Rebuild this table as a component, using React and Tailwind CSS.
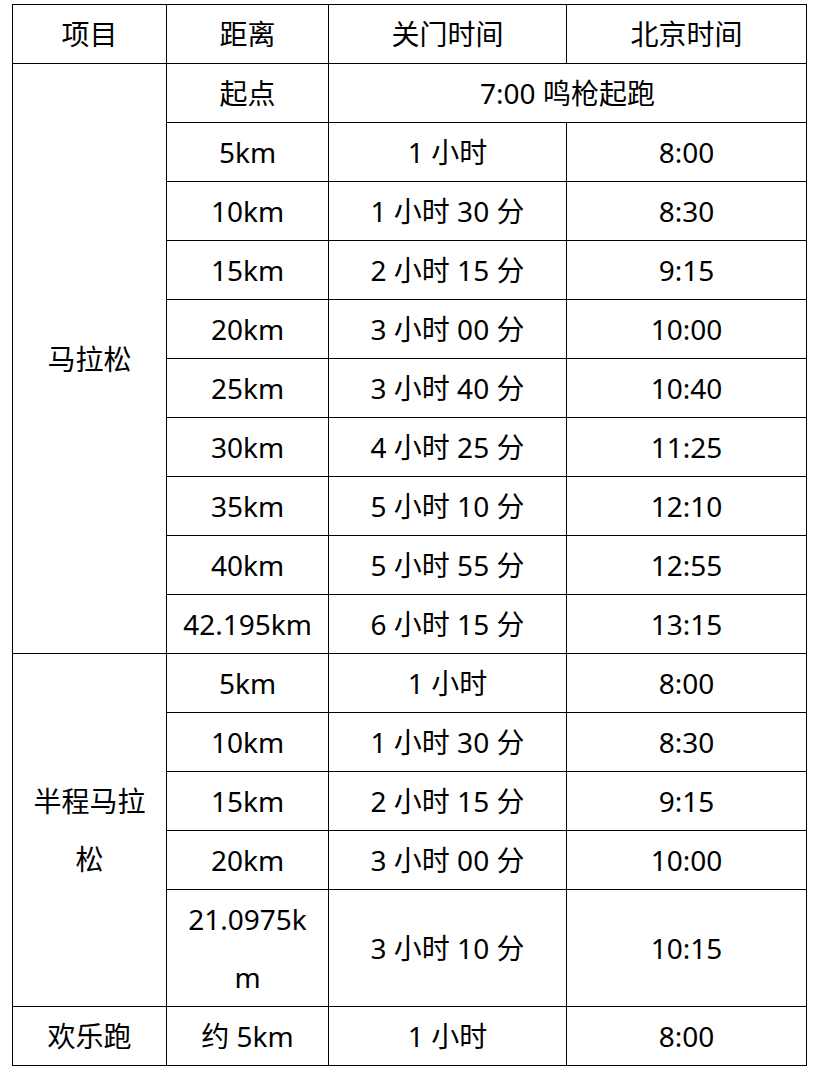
const rows = [
  ['5km', '1 小时', '8:00'],
  ['10km', '1 小时 30 分', '8:30'],
  ['15km', '2 小时 15 分', '9:15'],
  ['20km', '3 小时 00 分', '10:00'],
  ['25km', '3 小时 40 分', '10:40'],
  ['30km', '4 小时 25 分', '11:25'],
  ['35km', '5 小时 10 分', '12:10'],
  ['40km', '5 小时 55 分', '12:55'],
  ['42.195km', '6 小时 15 分', '13:15'],
]

const halfRows = [
  ['5km', '1 小时', '8:00'],
  ['10km', '1 小时 30 分', '8:30'],
  ['15km', '2 小时 15 分', '9:15'],
  ['20km', '3 小时 00 分', '10:00'],
]

const cell = 'border border-black p-0 text-center align-middle leading-[58px]'

export default function App() {
  return (
    <div
      className="bg-white min-h-screen pt-[4px] pl-[12px] text-black text-[28px]"
      style={{ fontFamily: '"Noto Sans", "Noto Sans CJK SC", sans-serif' }}
    >
      <table className="table-fixed border-collapse w-[794px]">
        <colgroup>
          <col className="w-[154px]" />
          <col className="w-[162px]" />
          <col className="w-[238px]" />
          <col className="w-[240px]" />
        </colgroup>
        <tbody>
          <tr>
            <td className={cell}>项目</td>
            <td className={cell}>距离</td>
            <td className={cell}>关门时间</td>
            <td className={cell}>北京时间</td>
          </tr>
          <tr>
            <td className={cell} rowSpan={10}>马拉松</td>
            <td className={cell}>起点</td>
            <td className={cell} colSpan={2}>7:00 鸣枪起跑</td>
          </tr>
          {rows.map((r, i) => (
            <tr key={i}>
              <td className={cell}>{r[0]}</td>
              <td className={cell}>{r[1]}</td>
              <td className={cell}>{r[2]}</td>
            </tr>
          ))}
          <tr>
            <td className={cell} rowSpan={5}>
              <div className="px-[18px] break-all">半程马拉松</div>
            </td>
            <td className={cell}>{halfRows[0][0]}</td>
            <td className={cell}>{halfRows[0][1]}</td>
            <td className={cell}>{halfRows[0][2]}</td>
          </tr>
          {halfRows.slice(1).map((r, i) => (
            <tr key={i}>
              <td className={cell}>{r[0]}</td>
              <td className={cell}>{r[1]}</td>
              <td className={cell}>{r[2]}</td>
            </tr>
          ))}
          <tr>
            <td className={cell}>
              21.0975k
              <br />
              m
            </td>
            <td className={cell}>3 小时 10 分</td>
            <td className={cell}>10:15</td>
          </tr>
          <tr>
            <td className={`${cell} leading-[56px]`}>欢乐跑</td>
            <td className={`${cell} leading-[56px]`}>约 5km</td>
            <td className={`${cell} leading-[56px]`}>1 小时</td>
            <td className={`${cell} leading-[56px]`}>8:00</td>
          </tr>
        </tbody>
      </table>
    </div>
  )
}
